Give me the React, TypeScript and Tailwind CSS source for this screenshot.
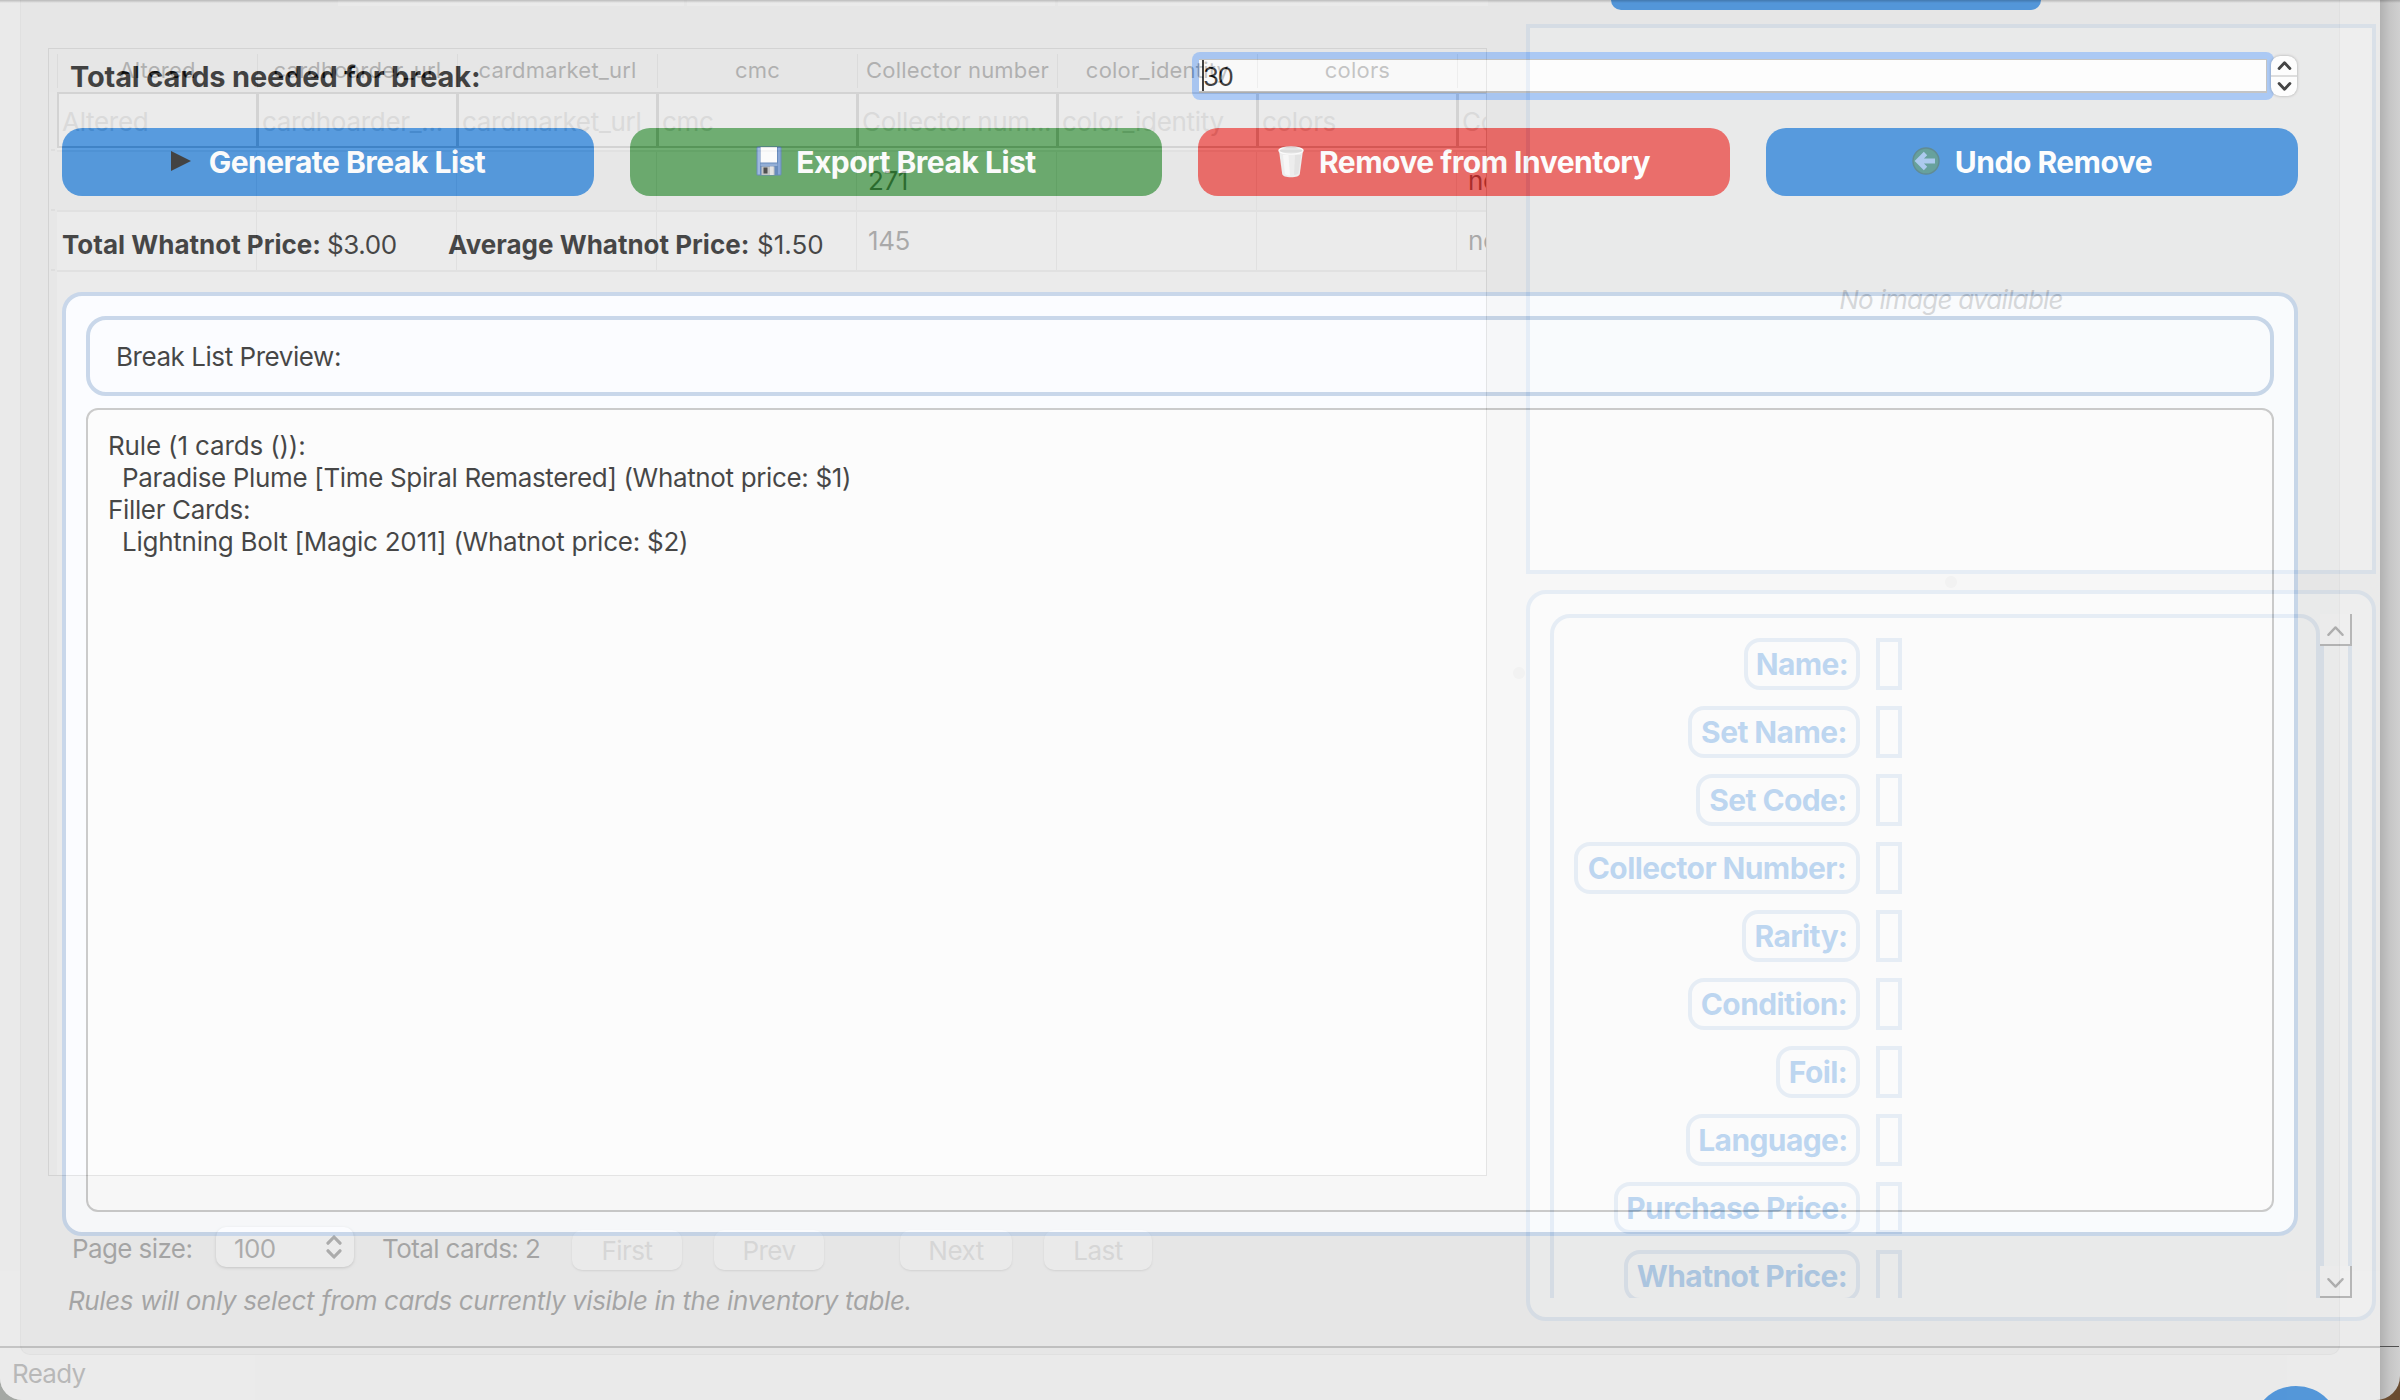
import React from "react";

const COLUMNS = [
  { head: "Altered", filter: "Altered" },
  { head: "cardhoarder_url", filter: "cardhoarder_..." },
  { head: "cardmarket_url", filter: "cardmarket_url" },
  { head: "cmc", filter: "cmc" },
  { head: "Collector number", filter: "Collector num..." },
  { head: "color_identity", filter: "color_identity" },
  { head: "colors", filter: "colors" },
  { head: "", filter: "Condition" },
];

const ROWS = [
  ["", "", "", "", "271", "", "", "near_mint"],
  ["", "", "", "", "145", "", "", "near_mint"],
];

const FIELDS = [
  { label: "Name:", width: "w-[116px]" },
  { label: "Set Name:", width: "w-[172px]" },
  { label: "Set Code:", width: "w-[164px]" },
  { label: "Collector Number:", width: "w-[286px]" },
  { label: "Rarity:", width: "w-[118px]" },
  { label: "Condition:", width: "w-[172px]" },
  { label: "Foil:", width: "w-[84px]" },
  { label: "Language:", width: "w-[174px]" },
  { label: "Purchase Price:", width: "w-[246px]" },
  { label: "Whatnot Price:", width: "w-[236px]" },
];

function Chevron({ up, thin, className }: { up?: boolean; thin?: boolean; className: string }) {
  return (
    <svg viewBox="0 0 16 10" className={className} fill="none" stroke="currentColor" strokeWidth={thin ? 2 : 3.2} strokeLinecap="round" strokeLinejoin="round">
      <path d={up ? "M2 8.2L8 2l6 6.200" : "M2 1.800L8 8l6-6.200"} />
    </svg>
  );
}

function InventoryTable() {
  return (
    <div className="flex h-[1128px] w-[1439px] flex-col overflow-hidden border border-[#a8a8a8] bg-white">
      <div className="flex h-[43px] shrink-0 items-center bg-[#ececec] pl-2">
        {COLUMNS.map((c, i) => (
          <div key={i} className="flex h-[34px] w-[200px] shrink-0 items-center justify-center border-l border-[#c4c4c4] text-[22px] tracking-[0.2px] text-[#2b2b2b]">
            {c.head}
          </div>
        ))}
      </div>
      <div className="flex min-h-0 grow">
        <div className="flex w-[8px] shrink-0 flex-col bg-[#f2f2f2]">
          <div className="h-[57px]" />
          <div className="ml-[2px] h-[2px] w-1 bg-[#d0d0d0]" />
          <div className="ml-[2px] mt-[58px] h-[2px] w-1 bg-[#d0d0d0]" />
          <div className="ml-[2px] mt-[58px] h-[2px] w-1 bg-[#d0d0d0]" />
        </div>
        <div className="flex flex-col">
          <div className="flex h-[56px] shrink-0">
            {COLUMNS.map((c, i) => (
              <div key={i} className="w-[200px] shrink-0 overflow-hidden whitespace-nowrap border-y-2 border-l-2 border-r border-[#a8a8a8] pl-[3px] text-[26px] leading-[56px] tracking-[-0.3px] text-[#c0c0c0]">
                {c.filter}
              </div>
            ))}
          </div>
          <div className="h-[4px] shrink-0 border-b-2 border-[#dcdcdc]" />
          {ROWS.map((row, r) => (
            <div key={r} className={"flex h-[60px] shrink-0 border-b-2 border-[#dadada] " + (r === 0 ? "bg-[#f2f2f2]" : "bg-white")}>
              {row.map((cell, i) => (
                <div key={i} className="w-[200px] shrink-0 border-r border-[#d6d6d6] pl-[11px] text-[26px] leading-[57px] tracking-[-0.4px] text-[#101010]">
                  {cell}
                </div>
              ))}
            </div>
          ))}
        </div>
      </div>
    </div>
  );
}

function PagerButton({ children, className }: { children: string; className: string }) {
  return (
    <div className={"flex h-10 items-center justify-center rounded-[10px] bg-[#fafafa] text-[26px] tracking-[-0.5px] text-[#b2b2b2] shadow-[0_1px_2px_rgba(0,0,0,0.3)] " + className}>
      {children}
    </div>
  );
}

function Pager() {
  return (
    <div className="mt-[51px] flex h-[43px] items-center pl-6 text-[26px] tracking-[-0.6px] text-black">
      <span className="w-[144px]">Page size:</span>
      <div className="mb-[3px] flex h-10 w-[138px] items-center rounded-[10px] bg-white pl-[18px] shadow-[0_1px_3px_rgba(0,0,0,0.5)]">
        <span className="w-[92px] pt-[2px] text-[#181818]">100</span>
        <div className="flex flex-col gap-1 text-[#181818]">
          <Chevron up className="h-[10px] w-4" />
          <Chevron className="h-[10px] w-4" />
        </div>
      </div>
      <span className="ml-[28px] w-[190px]">Total cards: 2</span>
      <PagerButton className="mt-[3px] w-[110px]">First</PagerButton>
      <PagerButton className="ml-8 mt-[3px] w-[110px]">Prev</PagerButton>
      <PagerButton className="ml-[76px] mt-[3px] w-[112px]">Next</PagerButton>
      <PagerButton className="ml-8 mt-[3px] w-[108px]">Last</PagerButton>
    </div>
  );
}

function ScrollButton({ up }: { up?: boolean }) {
  return (
    <div className="flex h-8 w-8 shrink-0 items-center justify-center border-b-2 border-r-2 border-[#303030] bg-white pt-1 text-[#202020]">
      <Chevron up={up} thin className="h-[12px] w-[19px]" />
    </div>
  );
}

function CardDetails() {
  return (
    <div className="h-[731px] rounded-[20px] border-4 border-[#b0c8e4] bg-[#f9fafb] p-5 pb-0">
      <div className="flex h-[684px] overflow-hidden">
        <div className="h-[760px] w-[770px] shrink-0 rounded-t-[20px] border-4 border-[#b0c8e4] pl-5 pt-5">
          <div className="flex flex-col gap-4">
            {FIELDS.map((f) => (
              <div key={f.label} className="flex gap-4">
                <div className="flex w-[286px] justify-end">
                  <div className={"flex h-[52px] items-center justify-center whitespace-nowrap rounded-[16px] border-4 border-[#b0c8e4] text-[30px] font-bold tracking-[-0.6px] text-[#1976d2] " + f.width}>
                    {f.label}
                  </div>
                </div>
                <div className="h-[52px] w-[26px] border-4 border-[#b0c8e4]" />
              </div>
            ))}
          </div>
        </div>
        <div className="flex w-8 flex-col">
          <ScrollButton up />
          <div className="grow border-x-4 border-[#b0c8e4]" />
          <ScrollButton />
        </div>
      </div>
    </div>
  );
}

function InventoryWindow() {
  return (
    <div className="flex h-[1400px] w-[2380px] flex-col bg-[#ececec]">
      <div className="flex h-[1346px] shrink-0">
        <div className="flex w-[1488px] flex-col">
          <div className="flex h-12 gap-[3px] pl-[338px]">
            <div className="h-[6px] w-[406px] bg-[#fcfcfc]" />
            <div className="h-[6px] w-[431px] bg-[#fcfcfc]" />
            <div className="h-[6px] w-[430px] shrink-0 bg-[#fcfcfc]" />
          </div>
          <div className="pl-12">
            <InventoryTable />
            <Pager />
            <div className="mt-[11px] whitespace-nowrap pl-5 text-[26px] italic leading-10 tracking-[-0.38px] text-black">
              Rules will only select from cards currently visible in the inventory table.
            </div>
          </div>
        </div>
        <div className="flex w-[38px] items-start justify-end pr-px pt-[667px]">
          <div className="h-3 w-3 rounded-full bg-[#d8d8d8]" />
        </div>
        <div className="flex w-[850px] flex-col pt-6">
          <div className="flex h-[550px] items-center justify-center border-4 border-[#b0c8e4] bg-[#f9fafa]">
            <span className="text-[26px] italic tracking-[-0.75px] text-[#777777]">No image available</span>
          </div>
          <div className="flex h-4 items-center justify-center">
            <div className="h-3 w-3 rounded-full bg-[#d8d8d8]" />
          </div>
          <CardDetails />
        </div>
      </div>
      <div className="grow border-t-2 border-[#606060] pl-3 text-[26px] leading-[52px] tracking-[-0.7px] text-[#383838]">Ready</div>
    </div>
  );
}

function ActionButton({ className, children }: { className: string; children: React.ReactNode }) {
  return (
    <div className={"flex h-[68px] flex-1 items-center justify-center whitespace-nowrap rounded-[20px] text-[30px] font-bold tracking-[-0.5px] text-white " + className}>
      {children}
    </div>
  );
}

function FloppyIcon() {
  return (
    <svg viewBox="0 0 26 30" className="mb-[2px] mr-[14px] h-[30px] w-[26px]">
      <rect x="0.5" y="0.5" width="25" height="29" rx="1.5" fill="#3565a8" />
      <rect x="1.500" y="1.500" width="2.500" height="27" fill="#7fa4d8" />
      <rect x="22" y="1.500" width="2.500" height="27" fill="#5f8aca" />
      <rect x="4.500" y="1" width="16.500" height="15.500" fill="#ffffff" />
      <rect x="4.500" y="17.500" width="17" height="2.500" fill="#6f95cc" />
      <rect x="5.500" y="20.500" width="13" height="8.500" fill="#b4b4b4" />
      <rect x="7.500" y="21.500" width="4" height="6" fill="#111111" />
      <rect x="14" y="20.500" width="3.500" height="8.500" fill="#e0e0e0" />
    </svg>
  );
}

function TrashIcon() {
  return (
    <svg viewBox="0 0 26 32" className="mr-[15px] h-8 w-[26px]">
      <path d="M1 4.500L4.200 28c.3 2 4 3.300 8.800 3.300s8.500-1.300 8.800-3.300L25 4.500z" fill="#ececec" />
      <path d="M5 9l2 19c2 1 3 1.500 5 1.600L10.500 9z" fill="#fafafa" />
      <path d="M17 9l-1 20c2-.2 3.500-.7 4.500-1.500L23 9z" fill="#dedede" />
      <ellipse cx="13" cy="4.500" rx="12" ry="3.600" fill="#dcdcdc" stroke="#ffffff" strokeWidth="1.400" />
    </svg>
  );
}

function BackIcon() {
  return (
    <svg viewBox="0 0 28 30" className="mb-[2px] mr-[15px] h-[30px] w-7">
      <circle cx="14" cy="15" r="13" fill="#2f7f78" stroke="#28626c" strokeWidth="1.400" />
      <path d="M13.500 7.500L6 15l7.500 7.500M7 15h16" fill="none" stroke="#8fb8ea" strokeWidth="4.800" />
    </svg>
  );
}

function BreakPanel() {
  return (
    <div className="absolute inset-y-0 left-0 flex w-[2380px] flex-col overflow-hidden bg-[#eaeaea] opacity-[0.72]">
      <div className="ml-5 flex h-[1355px] w-[2320px] shrink-0 flex-col rounded-b-[10px] border border-t-0 border-[#dcdcdc] bg-[#e4e4e4] px-[41px]">
        <div className="ml-[1549px] h-[10px] w-[430px] rounded-b-[16px] bg-[#1976d2]" />
        <div className="mt-[42px] flex h-12 items-center pl-[8px]">
          <div className="w-[1122px] pt-px text-[29px] font-bold tracking-[-0.15px] text-black">Total cards needed for break:</div>
          <div className="h-12 w-[1082px] rounded-[8px] bg-[#8eb7f2] p-[7px]">
            <div className="flex h-[34px] items-center border-b-2 border-r border-t border-[#b0b0b0] bg-white pl-[3px]">
              <div className="h-[31px] w-[2px] bg-black" />
              <span className="-ml-px pt-px text-[26px] tracking-[-1.5px] text-black">30</span>
            </div>
          </div>
          <div className="-ml-[3px] flex h-10 w-[26px] flex-col items-center justify-between rounded-[9px] bg-white py-[5px] text-black shadow-[0_0_3px_rgba(0,0,0,0.4)]">
            <Chevron up className="h-[9px] w-[15px]" />
            <div className="h-[2px] w-full bg-[#d4d4d4]" />
            <Chevron className="h-[9px] w-[15px]" />
          </div>
        </div>
        <div className="mt-7 flex gap-9">
          <ActionButton className="bg-[#1976d2]">
            <svg viewBox="0 0 20 20" className="mb-[3px] mr-[18px] h-5 w-5">
              <path d="M0 0l20 10L0 20z" fill="#000000" />
            </svg>
            Generate Break List
          </ActionButton>
          <ActionButton className="bg-[#388e3c]">
            <FloppyIcon />
            Export Break List
          </ActionButton>
          <ActionButton className="bg-[#e53935]">
            <TrashIcon />
            Remove from Inventory
          </ActionButton>
          <ActionButton className="bg-[#1976d2]">
            <BackIcon />
            Undo Remove
          </ActionButton>
        </div>
        <div className="mt-6 flex h-12 items-center text-[26px] text-black">
          <span className="w-[265px] font-bold">Total Whatnot Price:</span>
          <span className="w-[121px] tracking-[-0.4px]">$3.00</span>
          <span className="w-[309px] font-bold">Average Whatnot Price:</span>
          <span>$1.50</span>
        </div>
        <div className="mt-6 flex h-[944px] flex-col gap-3 rounded-[20px] border-4 border-[#b5c9e2] bg-[#fafcff] p-5">
          <div className="flex h-20 shrink-0 items-center rounded-[20px] border-4 border-[#b5c9e2] pl-[26px] pt-px text-[26px] tracking-[-0.45px] text-black">
            Break List Preview:
          </div>
          <div className="h-[804px] shrink-0 whitespace-pre rounded-[12px] border-2 border-[#b8b8b8] bg-[#fcfcfc] pl-5 pt-5 text-[26px] leading-8 tracking-[-0.35px] text-black">
            <div className="tracking-[-0.15px]">Rule (1 cards ()):</div>
            <div className="pl-[14px]">Paradise Plume [Time Spiral Remastered] (Whatnot price: $1)</div>
            <div>Filler Cards:</div>
            <div className="pl-[14px] tracking-[-0.25px]">Lightning Bolt [Magic 2011] (Whatnot price: $2)</div>
          </div>
        </div>
      </div>
      <div className="ml-[2252px] mt-[31px] h-[88px] w-[88px] shrink-0 rounded-full bg-[#1976d2]" />
    </div>
  );
}

export default function App() {
  return (
    <div className="h-[1400px] w-[2400px] overflow-hidden bg-gradient-to-r from-[#a4a8a4] to-[#6a4c30] font-['Inter',sans-serif]">
      <div className="relative flex h-full w-full overflow-hidden rounded-br-[24px]">
        <div className="relative h-full w-[2380px] shrink-0 overflow-hidden rounded-bl-[22px]">
          <InventoryWindow />
          <BreakPanel />
        </div>
        <div className="flex w-5 flex-col bg-gradient-to-r from-[#b2b2b2] via-[#c6c6c6] to-[#d0d0d0]">
          <div className="mt-[1346px] h-[1px] w-[19px] bg-[#505050]" />
        </div>
        <div className="absolute inset-x-0 top-0 h-[3px] bg-gradient-to-b from-black/20 to-transparent" />
      </div>
    </div>
  );
}
